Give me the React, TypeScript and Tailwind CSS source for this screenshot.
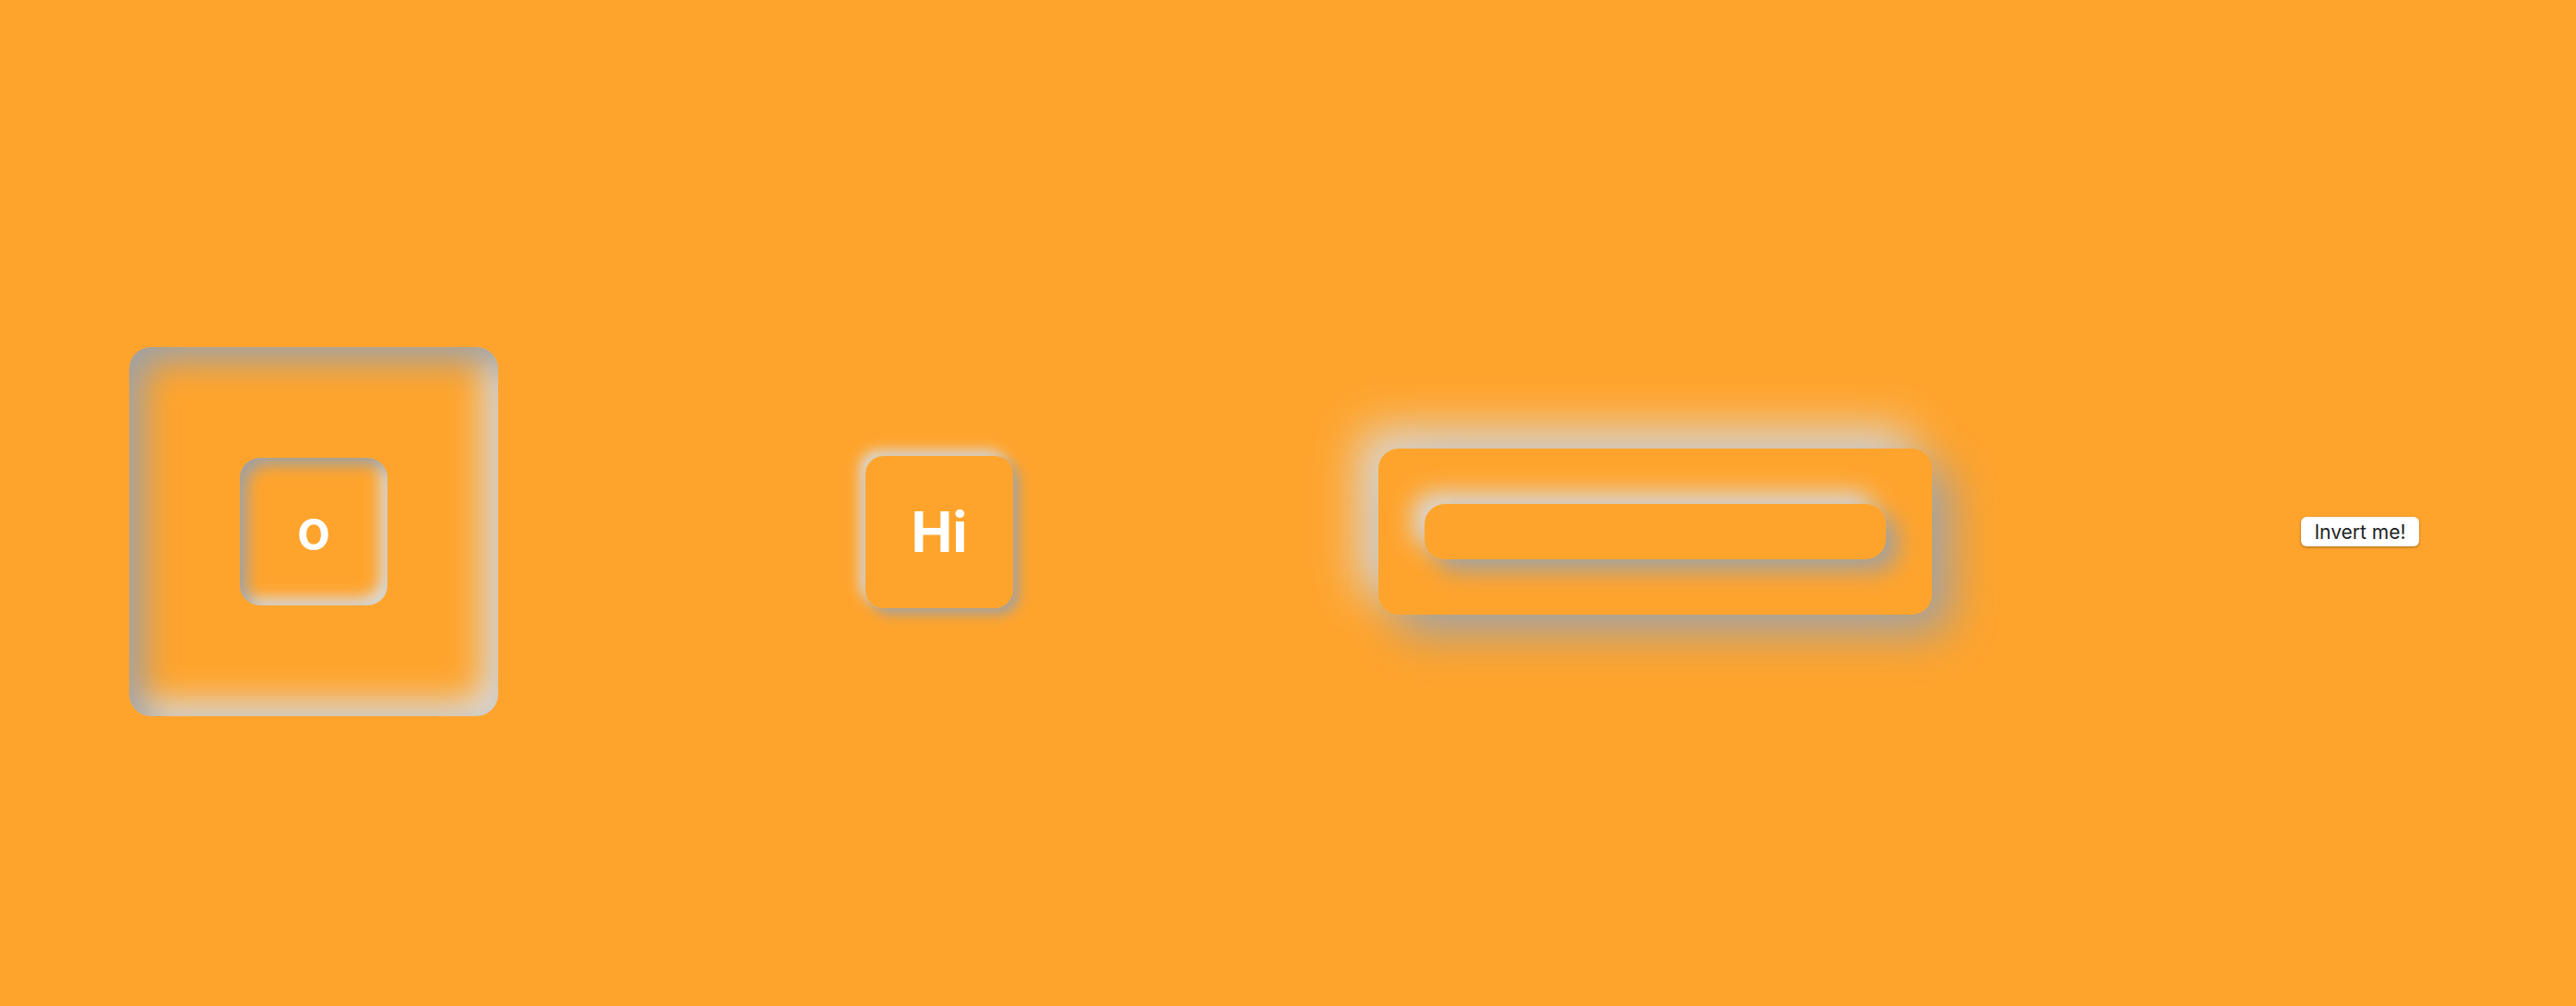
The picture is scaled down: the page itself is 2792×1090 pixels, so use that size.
import React from "react";

export default function App() {
  return (
    <div
      className="w-[2792px] h-[1090px] bg-[#fea42d] flex items-center pt-[62px] pl-[140px]"
      style={{ fontFamily: "Inter, 'Noto Sans', sans-serif" }}
    >
      <div className="w-[400px] h-[400px] shrink-0 rounded-[24px] bg-[#fea42d] flex items-center justify-center shadow-[inset_16px_16px_36px_#a0a0a0,inset_-16px_-16px_36px_#dcdcdc]">
        <div className="w-[160px] h-[160px] rounded-[22px] bg-[#fea42d] flex items-center justify-center shadow-[inset_8px_8px_16px_#a0a0a0,inset_-8px_-8px_16px_#dcdcdc]">
          <span className="text-white text-[60px] font-semibold leading-none -mt-[6px]">o</span>
        </div>
      </div>

      <div className="ml-[398px] w-[160px] h-[165px] shrink-0 rounded-[20px] bg-[#fea42d] flex items-center justify-center shadow-[6px_6px_14px_#a0a0a0,-6px_-6px_14px_#dcdcdc]">
        <span className="text-white text-[60px] font-bold leading-none">Hi</span>
      </div>

      <div className="ml-[396px] w-[600px] h-[180px] shrink-0 rounded-[22px] bg-[#fea42d] flex items-center justify-center shadow-[20px_20px_50px_#a0a0a0,-20px_-20px_50px_#dcdcdc]">
        <div className="w-[500px] h-[60px] rounded-[22px] bg-[#fea42d] shadow-[12px_12px_26px_#a0a0a0,-12px_-12px_26px_#dcdcdc]" />
      </div>

      <button className="ml-[400px] w-[128px] h-[32px] shrink-0 rounded-[6px] bg-white text-[#222222] text-[21px] leading-none shadow-[0_1px_3px_rgba(0,0,0,0.35)] flex items-center justify-center">
        Invert me!
      </button>
    </div>
  );
}
